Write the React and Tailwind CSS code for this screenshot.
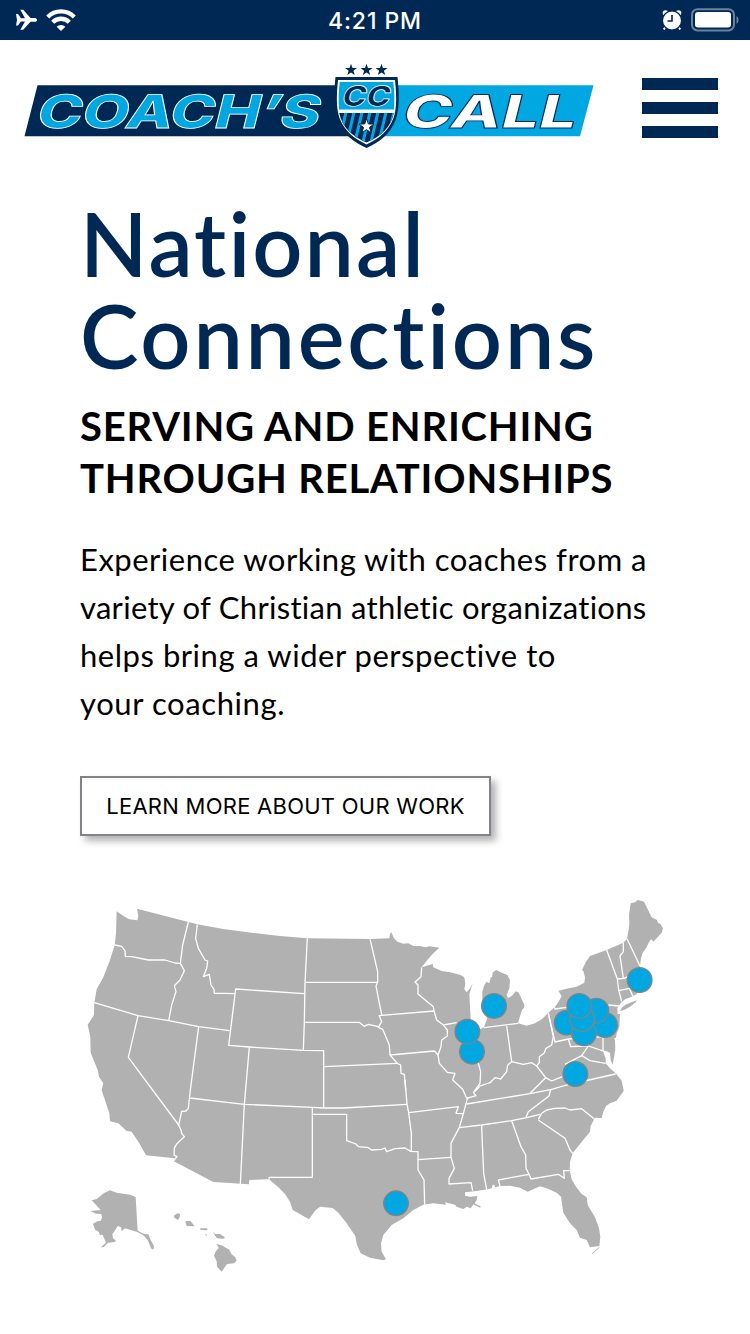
const NAVY = "#002855";
const SKY = "#00a7e1";

const STAR = "0,-1 .235,-.324 .951,-.309 .38,.124 .588,.809 0,.4 -.588,.809 -.38,.124 -.951,-.309 -.235,-.324";

const mainland =
  "M110 64 130 78 148 88 172 91 175 78 171 56 325 96 352 103 430 117 520 129 600 138 682 145 870 147 928 145 930 132 934 127 942 145 952 155 970 161 985 160 1000 168 1020 168 1036 172 1048 169 1078 173 1060 190 1040 212 1025 232 1058 222 1060 232 1085 243 1110 247 1140 254 1153 262 1156 280 1153 298 1160 307 1170 295 1178 280 1168 312 1170 350 1172 385 1180 430 1200 418 1212 412 1222 385 1216 365 1207 340 1207 305 1213 285 1220 275 1228 280 1232 262 1236 262 1238 248 1248 240 1262 247 1282 255 1290 270 1288 295 1280 315 1284 324 1295 318 1308 304 1316 308 1324 325 1333 345 1332 353 1326 360 1318 385 1314 400 1340 407 1365 400 1385 388 1404 370 1425 350 1436 335 1445 318 1435 302 1460 296 1490 290 1513 278 1515 262 1510 243 1506 240 1518 215 1530 198 1580 180 1630 158 1641 146 1646 120 1648 100 1647 75 1652 40 1665 37 1674 30 1692 35 1715 82 1731 90 1734 98 1742 103 1749 115 1745 128 1730 145 1720 155 1713 147 1705 160 1700 172 1688 188 1683 205 1680 228 1675 300 1670 312 1655 320 1635 328 1622 340 1612 355 1613 372 1620 372 1618 410 1610 430 1608 443 1602 445 1605 450 1606 480 1598 524 1592 510 1590 488 1576 482 1570 488 1577 505 1577 520 1590 535 1607 550 1625 572 1631 603 1620 618 1610 632 1590 640 1578 648 1570 665 1565 684 1545 683 1532 708 1530 725 1512 747 1495 768 1478 790 1470 815 1469 840 1475 868 1488 890 1505 912 1520 922 1523 945 1545 982 1557 1015 1561 1040 1558 1068 1530 1072 1520 1050 1500 1043 1490 1020 1470 1000 1450 968 1443 920 1430 908 1400 895 1380 889 1343 905 1320 893 1290 887 1260 888 1245 892 1243 884 1238 884 1235 895 1222 898 1190 903 1155 907 1155 917 1170 920 1192 918 1190 930 1184 940 1203 950 1200 953 1180 943 1172 955 1160 950 1150 957 1130 950 1125 944 1095 937 1098 944 1060 940 1030 944 1000 960 970 985 935 1005 910 1035 903 1060 905 1085 918 1108 910 1111 870 1103 842 1090 830 1062 826 1038 800 1000 775 968 758 954 720 950 705 962 687 988 638 960 630 935 615 912 595 892 567 868 508 870 507 883 400 876 280 813 284 805 198 796 178 760 155 725 140 723 115 700 90 694 88 670 68 610 65 600 70 580 57 560 53 540 32 488 31 440 23 404 42 375 43 338 50 298 70 262 90 210 104 165 108 130Z";

const stateLines = [
  "M104 165 125 169 135 182 136 199 155 200 205 210 255 210 285 219 301 220",
  "M325 96 308 165 301 220 313 242 300 270 283 287 288 305 275 345 266 392",
  "M43 338 174 377 266 392 356 410 449 422",
  "M352 103 347 145 355 175 375 210 383 213 380 235 370 260 388 253 393 285 402 298 403 310 430 310 464 311",
  "M672 311 467 297 446 466 508 471 670 481 731 482 731 654",
  "M682 145 675 278 673 397 670 481",
  "M677 277 893 277",
  "M673 397 838 397 852 409 865 403 895 410",
  "M870 147 893 245 893 277 888 288 900 350 906 377",
  "M896 377 1062 363",
  "M898 377 905 395 895 412 908 418 928 465 930 495 952 520 962 525 963 550 973 553 977 600",
  "M1025 232 1023 260 1005 276 1014 285 1014 312 1060 350 1062 363 1070 390 1090 405 1130 398",
  "M1090 405 1102 420 1102 438 1085 450 1083 470 1074 495 1078 520 1102 547 1125 550 1118 570 1148 598 1160 625",
  "M930 495 1063 483 1074 495",
  "M733 530 952 520",
  "M508 471 493 643 481 882",
  "M356 410 331 600 325 655 318 663 305 664 296 705",
  "M174 377 145 502 296 705 303 720 305 730 313 740 290 762 283 775 282 795 291 800 280 813",
  "M329 624 493 643 697 652 731 654 790 654 981 643",
  "M697 652 697 862 567 862 568 868",
  "M697 673 800 673 800 752 828 762 835 770 865 773 875 780 905 778 915 774 920 785 945 776 975 774 992 784 1014 785 1014 840 1032 870 1034 944",
  "M975 570 981 643 986 668 994 730 994 784",
  "M986 668 1135 650 1128 670 1150 671",
  "M1163 622 1150 671 1138 712 1113 760 1113 802 1123 835 1107 865 1107 882 1173 878 1178 902",
  "M1014 809 1113 802",
  "M1138 713 1205 705 1295 692 1340 683 1380 673",
  "M1160 642 1350 611 1415 598 1460 585 1607 552",
  "M1350 610 1360 600 1397 563",
  "M1412 598 1407 618 1345 665 1338 682",
  "M1205 705 1207 760 1211 850 1220 898",
  "M1295 692 1323 770 1337 795 1338 835 1347 853",
  "M1260 888 1255 870 1347 853 1353 867 1435 853 1453 865 1451 842 1470 842",
  "M1375 688 1385 670 1400 660 1425 655 1455 654 1470 660 1505 656 1543 687",
  "M1375 690 1455 745 1470 780 1478 790",
  "M1180 430 1195 520 1202 545 1200 580 1180 608 1188 617 1160 625",
  "M1183 606 1200 588 1230 578 1245 563 1262 567 1280 545 1283 525 1295 515 1330 523 1355 518 1370 528 1378 518 1378 500 1392 490 1398 475 1415 465 1420 440 1405 370",
  "M1212 413 1315 400",
  "M1280 408 1295 515",
  "M1370 528 1397 563 1415 573 1447 560",
  "M1455 523 1505 497 1525 468 1575 485",
  "M1505 497 1530 512 1577 520",
  "M1405 370 1425 456 1465 447 1569 440 1569 483",
  "M1465 447 1472 470 1520 468",
  "M1423 352 1425 357 1460 352M1585 345 1618 348",
  "M1580 180 1612 267 1616 300 1625 335",
  "M1612 267 1632 265 1660 253",
  "M1630 158 1630 185 1620 198 1630 265",
  "M1641 146 1680 228",
  "M1616 302 1648 295 1658 318M1648 295 1655 292",
];

const islands = [
  "M1620 363 1626 352 1640 343 1670 331 1668 336 1650 350 1632 360Z",
  "M35 931 50 927 72 909 90 901 110 908 150 914 167 921 173 1022 190 1031 205 1033 212 1050 222 1068 220 1079 213 1075 203 1050 190 1036 172 1026 135 1015 125 1024 123 1012 113 1008 104 1023 97 1032 99 1045 108 1052 104 1056 84 1058 72 1070 62 1072 78 1058 68 1034 60 1036 56 1025 45 1019 39 1001 52 994 62 992 66 983 64 972 48 971 31 963 62 960Z",
  "M281 977 293 970 300 972 299 982 294 990 284 984Z",
  "M316 994 331 992 344 1009 320 1008Z",
  "M360 1015 382 1015 382 1021 362 1020Z",
  "M374 1033 382 1034 379 1037Z",
  "M398 1024 405 1032 420 1032 435 1042 430 1046 411 1045 404 1035Z",
  "M410 1062 425 1066 448 1079 454 1092 466 1102 470 1112 462 1120 441 1122 425 1145 411 1130 410 1114 402 1097 408 1083 416 1074Z",
];

const pins = [
  [1460, 398], [1575, 405], [1549, 362], [1512, 430], [1506, 387], [1498, 348],
  [1242, 348], [1176, 485], [1162, 425], [1679, 270], [1486, 552], [948, 940],
];

function StatusBar() {
  return (
    <div className="grid h-10 grid-cols-3 items-center bg-[#002855] px-[14px] text-white">
      <div className="flex items-center gap-2">
        <svg width="24" height="22" viewBox="0 0 24 22" fill="white">
          <path d="M2 5h2l3 4.300h4L6.300.8h2.900l7.300 8.200H21c1 0 2 1.100 2 1.900s-1 1.900-2 1.900h-4.500L9.200 20.800H6.300l4.700-8.200H7l-3 4H2l1-5.700z" />
        </svg>
        <svg width="30" height="24" viewBox="0 0 30 24" fill="none" stroke="white" strokeWidth="4.300">
          <path d="M1.700 9a18.600 18.600 0 0 1 26.600 0" />
          <path d="M6.700 14.200a11.700 11.700 0 0 1 16.600 0" />
          <path d="M15 23l-4.400-4.300a6.300 6.300 0 0 1 8.800 0z" fill="white" stroke="none" />
        </svg>
      </div>
      <div className="pt-0.5 text-center font-['Inter',sans-serif] text-[23px] font-medium tracking-[0.9px] whitespace-nowrap">4:21 PM</div>
      <div className="-mr-1 flex items-center justify-end gap-[9px]">
        <svg width="20" height="22" viewBox="0 0 20 22">
          <circle cx="3.500" cy="4" r="2.800" fill="white" />
          <circle cx="16.500" cy="4" r="2.800" fill="white" />
          <path d="M4 17 1.800 20.500M16 17l2.200 3.500" stroke="white" strokeWidth="2" />
          <circle cx="10" cy="11.500" r="9.600" fill="white" stroke={NAVY} strokeWidth="1.300" />
          <path d="M10 6v6H5.500" stroke={NAVY} strokeWidth="1.600" fill="none" />
        </svg>
        <svg width="49" height="24" viewBox="0 0 49 24">
          <rect x="1" y="1.200" width="42" height="21.200" rx="5.500" fill="none" stroke="white" strokeOpacity=".42" strokeWidth="2" />
          <rect x="4" y="4" width="36" height="15.400" rx="3" fill="white" />
          <path d="M45.500 8c2.700 1.200 2.700 6.600 0 7.800z" fill="white" fillOpacity=".42" />
        </svg>
      </div>
    </div>
  );
}

function Logo() {
  return (
    <svg width="572" height="88" viewBox="24 62 572 88" className="font-['Inter',sans-serif] font-extrabold">
      <path d="M37.500 85.300H365V136.300H24.500z" fill={NAVY} />
      <path d="M365 85.300H593.500L580 136.300H365z" fill={SKY} />
      <g transform="translate(34.500 127.800) skewX(-14)">
        <text fontSize="46" textLength="283" lengthAdjust="spacingAndGlyphs" fill={SKY} stroke="white" strokeWidth=".8">COACH’S</text>
      </g>
      <g transform="translate(400 127.800) skewX(-14)">
        <text fontSize="46" textLength="174" lengthAdjust="spacingAndGlyphs" fill="white" stroke={NAVY} strokeWidth=".9">CALL</text>
      </g>
      {[351, 366.500, 381.500].map((x) => (
        <polygon key={x} points={STAR} transform={`translate(${x} 70) scale(6.300)`} fill={NAVY} />
      ))}
      <path d="M335.500 77H397.500C399 92 400 106 396 119C390 135 379 142 366.500 148C354 142 343 135 337 119C333 106 334 92 335.500 77Z" fill={NAVY} />
      <path d="M338 80H395C396.500 95 397 108 393.500 118C388 132 378 139 366.500 144.500C355 139 345 132 339.500 118C336 108 336.500 95 338 80Z" fill="white" />
      <path d="M339.700 82H393.300C394.300 91 394.700 100 394 109.500H339C338.300 100 338.700 91 339.700 82Z" fill={SKY} />
      <clipPath id="shield-base"><path d="M339.200 113H393.800C391 127 381 136.500 366.500 142.500C352 136.500 342 127 339.200 113Z" /></clipPath>
      <g clipPath="url(#shield-base)">
        <path d="M338 110h58v36h-58z" fill={NAVY} />
        <path d="M346 112 339 142M354 112 347 142M362 112 355 142M370 112 363 142M378 112 371 142M386 112 379 142M394 112 387 142" stroke={SKY} strokeWidth="3" />
      </g>
      <polygon points={STAR} transform="translate(366.500 126.500) scale(7.800)" fill="white" stroke={NAVY} strokeWidth=".12" />
      <g transform="translate(340.500 106.300) skewX(-14)">
        <text fontSize="28" textLength="48" lengthAdjust="spacingAndGlyphs" fill={NAVY} stroke="white" strokeWidth=".7">CC</text>
      </g>
    </svg>
  );
}

function MapUSA() {
  return (
    <svg width="590" height="400" viewBox="0 0 1770 1200">
      <g fill="#b1b1b1">
        <path d={mainland} />
        {islands.map((d) => <path key={d} d={d} />)}
      </g>
      <path d="M1537 1091 1558 1072" stroke="#b1b1b1" strokeWidth="3" />
      <g fill="none" stroke="white" strokeWidth="3.900" strokeLinejoin="round">
        {stateLines.map((d) => <path key={d} d={d} />)}
      </g>
      <g fill={SKY} stroke="#808487" strokeWidth="4">
        {pins.map(([x, y]) => <circle key={`${x}-${y}`} cx={x} cy={y} r="37" />)}
      </g>
    </svg>
  );
}

export default function App() {
  return (
    <div className="h-[1334px] w-[750px] overflow-hidden bg-white font-['Lato',sans-serif] text-black [font-variant-ligatures:none]">
      <StatusBar />
      <header className="flex items-start justify-between pt-[22px] pr-8 pl-6">
        <Logo />
        <button aria-label="Menu" className="mt-4 flex w-[76px] flex-col gap-3">
          <span className="h-3 bg-[#002855]" />
          <span className="h-3 bg-[#002855]" />
          <span className="h-3 bg-[#002855]" />
        </button>
      </header>
      <main className="px-20 pt-[47px]">
        <h1 className="text-[88px] leading-[92px] font-semibold whitespace-nowrap text-[#002855]">
          <span className="block tracking-[2.1px]">National</span>
          <span className="block tracking-[2.8px]">Connections</span>
        </h1>
        <h2 className="mt-[19px] text-[40px] leading-[52px] font-bold whitespace-nowrap">
          <span className="block tracking-[0.800px]">SERVING AND ENRICHING</span>
          <span className="block tracking-[0.800px]">THROUGH RELATIONSHIPS</span>
        </h2>
        <p className="mt-[31px] text-[31px] leading-[48px] whitespace-nowrap">
          <span className="block tracking-[0.5px]">Experience working with coaches from a</span>
          <span className="block tracking-[0.28px]">variety of Christian athletic organizations</span>
          <span className="block tracking-[0.53px]">helps bring a wider perspective to</span>
          <span className="block tracking-[0.6px]">your coaching.</span>
        </p>
        <button className="mt-[49px] flex h-[60px] w-[411px] items-center justify-center border-2 border-[#828288] bg-white font-['Inter',sans-serif] text-[22px] tracking-[0.25px] whitespace-nowrap shadow-[5px_5px_7px_rgba(0,0,0,0.3)]">
          LEARN MORE ABOUT OUR WORK
        </button>
        <div className="mt-[54px]"><MapUSA /></div>
      </main>
    </div>
  );
}
